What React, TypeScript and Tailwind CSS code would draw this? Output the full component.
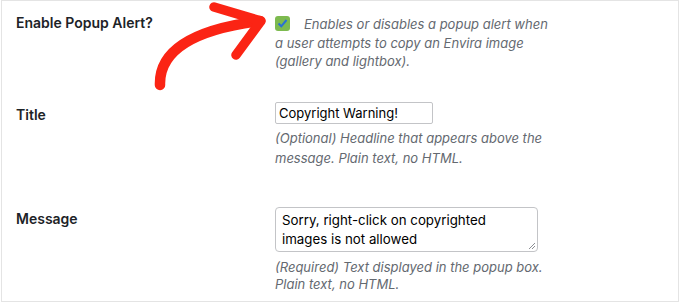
import React from 'react';

const font = { fontFamily: 'Inter, "Liberation Sans", sans-serif' };

function Arrow() {
    return (
        <svg className="absolute left-0 top-0 pointer-events-none" width="680" height="305" viewBox="0 0 680 305">
            <g fill="none" stroke="#fb2414" strokeLinecap="round" strokeLinejoin="round">
                <path d="M160 85 C159 52 190 30 260 21" strokeWidth="10.5" />
                <path d="M214 7 L261 21 L236 55" strokeWidth="9.5" />
            </g>
        </svg>
    );
}

export default function App() {
    return (
        <div className="relative w-[680px] h-[305px] bg-white" style={font}>
            <div className="ml-[1px] w-[678px] h-[302px] border border-[#e4e4e4] bg-white">
                {/* Enable popup */}
                <div className="flex h-[86px] pt-[13px]">
                    <div className="w-[273px] pl-[14px] text-[14px] font-semibold text-[#1d2327] leading-[18px]">
                        Enable Popup Alert?
                    </div>
                    <div className="relative w-[282px] pt-[1px]">
                        <span className="absolute left-0 top-[2px] w-[15px] h-[15px] rounded-[3px] bg-[#7dba4f]">
                            <svg className="absolute left-[2px] top-[2px]" width="11" height="11" viewBox="0 0 11 11">
                                <path d="M1.5 5.5 L4.3 8.3 L9.5 2" fill="none" stroke="#2a6fd6" strokeWidth="2" />
                            </svg>
                        </span>
                        <p className="indent-[29px] text-[13px] italic text-[#646970] leading-[18.6px]">
                            Enables or disables a popup alert when a user attempts to copy an Envira image (gallery and lightbox).
                        </p>
                    </div>
                </div>

                {/* Title */}
                <div className="flex h-[120px] pt-[15px]">
                    <div className="w-[273px] pl-[14px] pt-[4px] text-[14px] font-semibold text-[#1d2327] leading-[18px]">
                        Title
                    </div>
                    <div className="w-[280px]">
                        <div className="w-[158px] h-[22px] border border-[#c3c4c7] rounded-[2px] px-[3px] text-[13px] leading-[20px] text-black">
                            Copyright Warning!
                        </div>
                        <p className="mt-[4px] text-[13px] italic text-[#646970] leading-[20px]">
                            (Optional) Headline that appears above the message. Plain text, no HTML.
                        </p>
                    </div>
                </div>

                {/* Message */}
                <div className="flex">
                    <div className="w-[273px] pl-[14px] pt-[3px] text-[14px] font-semibold text-[#1d2327] leading-[18px]">
                        Message
                    </div>
                    <div className="w-[280px]">
                        <div className="relative w-[263px] h-[45px] border border-[#c3c4c7] rounded-[4px] px-[6px] pt-[3px] text-[13.3px] leading-[19px] text-black">
                            Sorry, right-click on copyrighted images is not allowed
                            <svg className="absolute right-[1px] bottom-[1px]" width="8" height="8" viewBox="0 0 8 8">
                                <path d="M1 7 L7 1 M4 7 L7 4" stroke="#8c8f94" strokeWidth="1" />
                            </svg>
                        </div>
                        <p className="mt-[7px] text-[13px] italic text-[#646970] leading-[17px]">
                            (Required) Text displayed in the popup box. Plain text, no HTML.
                        </p>
                    </div>
                </div>
            </div>
            <Arrow />
        </div>
    );
}
